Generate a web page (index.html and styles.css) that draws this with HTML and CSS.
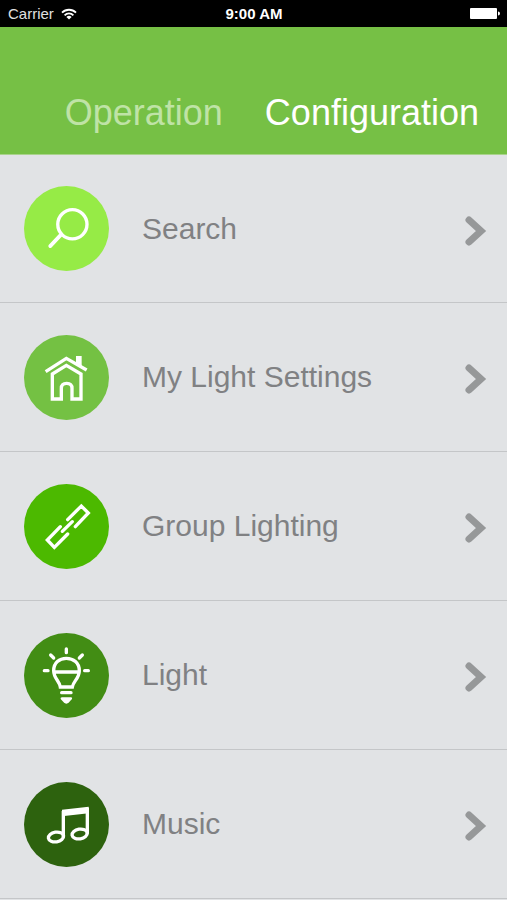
FILE: index.html
```html
<!DOCTYPE html>
<html lang="en">
<head>
<meta charset="utf-8">
<meta name="viewport" content="width=device-width, initial-scale=1">
<title>Configuration</title>
<link rel="stylesheet" href="styles.css">
</head>
<body>
<div class="status">
  <div class="carrier">
    <span>Carrier</span>
    <svg class="wifi" viewBox="0 0 16 12" aria-hidden="true">
      <path d="M1 4.6a10 10 0 0 1 14 0M3.6 7.3a6.2 6.2 0 0 1 8.8 0" fill="none" stroke="currentColor" stroke-width="1.8"/>
      <path d="M8 11.6 5.4 9a3.7 3.7 0 0 1 5.2 0z" fill="currentColor"/>
    </svg>
  </div>
  <div class="time">9:00 AM</div>
  <svg class="battery" viewBox="0 0 30 13" aria-hidden="true">
    <rect x="0" y="1" width="27" height="11" rx="1" fill="currentColor"/>
    <path d="M28 4.5q2 0 2 2t-2 2z" fill="currentColor"/>
  </svg>
</div>
<header class="header">
  <nav class="tabs">
    <a class="tab" href="#operation">Operation</a>
    <a class="tab tab-active" href="#configuration" aria-current="page">Configuration</a>
  </nav>
</header>
<main>
  <ul class="menu">
    <li><a class="row" href="#search">
      <svg class="icon search" viewBox="24 19 253 253" aria-hidden="true">
        <circle class="disc" cx="150.500" cy="145.500" r="126.500"/>
        <circle class="line" cx="168" cy="133" r="43.500"/>
        <path class="line thick" d="M135 163 102 198"/>
      </svg>
      <span class="label">Search</span>
      <svg class="chevron" viewBox="0 0 22 30" aria-hidden="true"><path d="M4 4 16 15 4 26"/></svg>
    </a></li>
    <li><a class="row" href="#settings">
      <svg class="icon settings" viewBox="24 21 255 255" aria-hidden="true">
        <circle class="disc" cx="151.500" cy="148.500" r="127.500"/>
        <path class="line" d="M89 131 151 91 212 126"/>
        <path class="solid" d="M180 84h17v34l-17-10z"/>
        <path class="line" d="M109 138V213H136V181Q136 166 152 166T168 181V213H195V138L151 112Z"/>
      </svg>
      <span class="label">My Light Settings</span>
      <svg class="chevron" viewBox="0 0 22 30" aria-hidden="true"><path d="M4 4 16 15 4 26"/></svg>
    </a></li>
    <li><a class="row" href="#group">
      <svg class="icon group" viewBox="24 21 255 255" aria-hidden="true">
        <circle class="disc" cx="151.500" cy="148.500" r="127.500"/>
        <path class="line round" d="M155 128 196 87 217 108 178 149M133 149 94 189 115 211 155 171"/>
        <path class="line round" d="M139 163 169 134"/>
      </svg>
      <span class="label">Group Lighting</span>
      <svg class="chevron" viewBox="0 0 22 30" aria-hidden="true"><path d="M4 4 16 15 4 26"/></svg>
    </a></li>
    <li><a class="row" href="#light">
      <svg class="icon light" viewBox="24 21 255 255" aria-hidden="true">
        <circle class="disc" cx="151.500" cy="148.500" r="127.500"/>
        <path class="line" d="M133 183C131 165 113 157 113 134C113 110 130 97 151 97S190 110 190 134C190 157 172 165 169 183ZM114 138H189"/>
        <path class="line round" d="M151 69v11M104 87l9 9M199 87l-9 9M85 134h11M206 134h11M137 200h28"/>
        <path class="solid" d="M138 214h27q5 0 3 5l-9 10q-8 8-16 0l-9-10q-2-5 4-5z"/>
      </svg>
      <span class="label">Light</span>
      <svg class="chevron" viewBox="0 0 22 30" aria-hidden="true"><path d="M4 4 16 15 4 26"/></svg>
    </a></li>
    <li><a class="row" href="#music">
      <svg class="icon music" viewBox="24 21 255 255" aria-hidden="true">
        <circle class="disc" cx="151.500" cy="148.500" r="127.500"/>
        <ellipse class="line" cx="120" cy="186" rx="23" ry="14.500" transform="rotate(-9 120 186)"/>
        <ellipse class="line" cx="191" cy="177" rx="23" ry="14.500" transform="rotate(-9 191 177)"/>
        <path class="line" d="M142 186V108M214 176V98"/>
        <path class="solid" d="M138 104 218 95V115L138 124Z"/>
      </svg>
      <span class="label">Music</span>
      <svg class="chevron" viewBox="0 0 22 30" aria-hidden="true"><path d="M4 4 16 15 4 26"/></svg>
    </a></li>
  </ul>
</main>
</body>
</html>
```
FILE: styles.css
```css
* { box-sizing: border-box; }

body {
  margin: 0;
  background: #e1e3e5;
  font-family: "Liberation Sans", Arial, sans-serif;
}

a { color: inherit; text-decoration: none; }

.status {
  display: grid;
  grid-template-columns: 1fr auto 1fr;
  align-items: center;
  height: 27px;
  padding: 0 7px 0 8px;
  background: #000;
  color: #fff;
  font-size: 15px;
}

.carrier {
  display: flex;
  align-items: center;
  gap: 7px;
  color: #e0e0e0;
}

.wifi { width: 16px; height: 12px; color: #fff; }
.time { font-size: 15px; font-weight: bold; }
.battery { width: 30px; height: 13px; justify-self: end; }

.header {
  height: 128px;
  padding: 64px 28px 0 24px;
  background: #76c045;
  border-bottom: 1px solid #a9d38b;
}

.tabs {
  display: flex;
  justify-content: flex-end;
  gap: 42px;
  font-size: 36px;
  line-height: 44px;
}

.tab { color: #bfe3a6; }
.tab-active { color: #fff; }

.menu { margin: 0; padding: 0; list-style: none; }

.row {
  display: flex;
  align-items: center;
  height: 149px;
  padding: 0 20px 0 24px;
  border-bottom: 1px solid #c4c6c8;
}

.menu li:first-child .row { height: 148px; }

.icon { width: 85px; height: 85px; flex: none; }
.line { fill: none; stroke: #fff; stroke-width: 10; }
.thick { stroke-width: 11; }
.round { stroke-linecap: round; }
.solid { fill: #fff; }

.search .disc { fill: #96eb46; }
.search .thick { stroke-linecap: round; }
.settings .disc { fill: #74c143; }
.group .disc { fill: #4cb900; }
.light .disc { fill: #428d14; }
.music .disc { fill: #2d620e; }

.label {
  flex: 1;
  margin-left: 33px;
  color: #808183;
  font-size: 30px;
  line-height: 36px;
}

.chevron { width: 22px; height: 30px; margin-top: 4px; }
.chevron path {
  fill: none;
  stroke: #969899;
  stroke-width: 7;
  stroke-linecap: round;
}
```
